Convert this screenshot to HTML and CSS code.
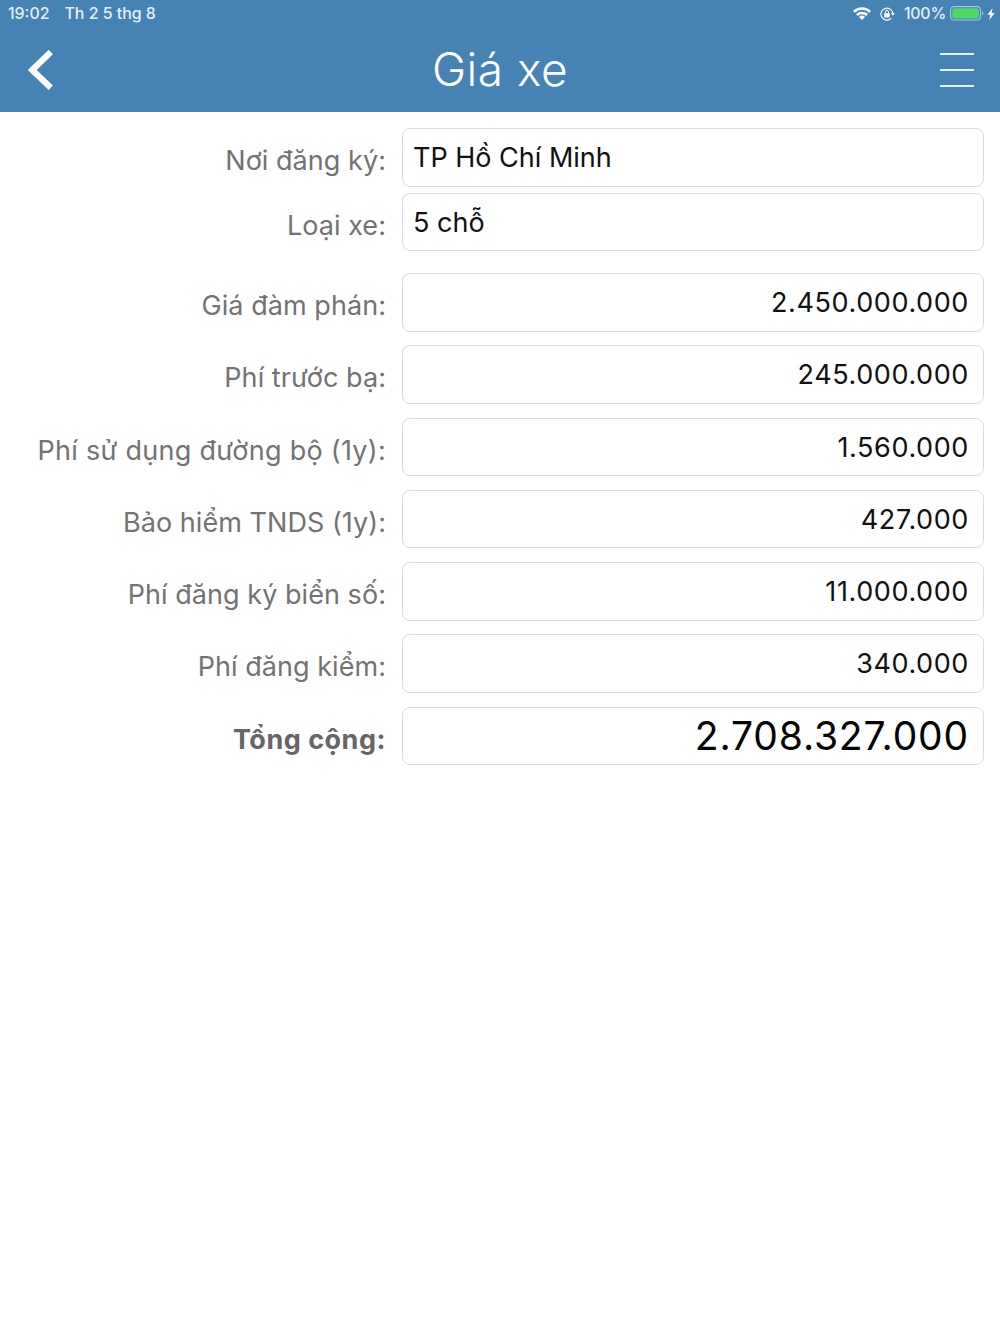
FILE: index.html
```html
<!DOCTYPE html>
<html lang="vi">

<head>
    <meta charset="UTF-8">
    <meta name="viewport" content="width=device-width, initial-scale=1.0">
    <title>Giá xe</title>
    <link rel="stylesheet" href="styles.css">
</head>

<body>
    <header>
        <div class="status-bar">
            <span class="status-time">19:02</span>
            <span class="status-date">Th 2 5 thg 8</span>
            <svg class="icon-wifi" width="18" height="13" viewBox="0 0 18 13" fill="none" stroke="#fff" stroke-width="2.5">
                <path d="M0.9 4.9a11.6 11.6 0 0 1 16.2 0"/>
                <path d="M3.9 8a7.3 7.3 0 0 1 10.2 0"/>
                <path d="M9 13L5.9 9.9a4.4 4.4 0 0 1 6.2 0z" fill="#fff" stroke="none"/>
            </svg>
            <svg class="icon-lock" width="15" height="14" viewBox="0 0 15 14" fill="none" stroke="#fff">
                <path d="M11.2 11.4A6 6 0 1 1 12.9 6.2" stroke-width="1.1"/>
                <path d="M10.8 6.1h4.1l-2 2.7z" fill="#fff" stroke="none"/>
                <rect x="4.2" y="6.2" width="5.6" height="4.2" rx="0.6" fill="#fff" stroke="none"/>
                <path d="M5.4 6.4V5a1.6 1.6 0 0 1 3.2 0v1.4" stroke-width="1"/>
            </svg>
            <span class="status-percent">100%</span>
            <svg class="icon-battery" width="35" height="15" viewBox="0 0 35 15">
                <rect x="0.6" y="0.6" width="29.8" height="13.4" rx="3.4" fill="none" stroke="#a9c6de" stroke-width="1.1"/>
                <rect x="2.2" y="2.2" width="26.6" height="10.2" rx="1.8" fill="#4cd964"/>
                <path d="M32 5.2c1.8 0.6 1.8 3.6 0 4.2z" fill="#a9c6de"/>
            </svg>
            <svg class="icon-bolt" width="8" height="12" viewBox="0 0 8 12">
                <path d="M5.6 0L0.4 6.8h2.9L2.2 12 7.7 5H4.6z" fill="#fff"/>
            </svg>
        </div>
        <div class="nav-bar">
            <svg class="icon-back" width="26" height="42" viewBox="0 0 26 42">
                <path d="M22.8 3L4.2 20.9 22.8 38.8" fill="none" stroke="#fff" stroke-width="6.2"/>
            </svg>
            <div class="nav-title">Giá xe</div>
            <div class="menu-button">
                <span></span>
                <span></span>
                <span></span>
            </div>
        </div>
    </header>

    <main>
        <div class="group-select">
            <div class="row">
                <div class="label">Nơi đăng ký:</div>
                <div class="field">TP Hồ Chí Minh</div>
            </div>
            <div class="row">
                <div class="label">Loại xe:</div>
                <div class="field">5 chỗ</div>
            </div>
        </div>

        <div class="group-price">
            <div class="row">
                <div class="label">Giá đàm phán:</div>
                <div class="field number">2.450.000.000</div>
            </div>
            <div class="row">
                <div class="label">Phí trước bạ:</div>
                <div class="field number">245.000.000</div>
            </div>
            <div class="row">
                <div class="label label-road">Phí sử dụng đường bộ (1y):</div>
                <div class="field number">1.560.000</div>
            </div>
            <div class="row">
                <div class="label">Bảo hiểm TNDS (1y):</div>
                <div class="field number">427.000</div>
            </div>
            <div class="row">
                <div class="label">Phí đăng ký biển số:</div>
                <div class="field number">11.000.000</div>
            </div>
            <div class="row">
                <div class="label">Phí đăng kiểm:</div>
                <div class="field number">340.000</div>
            </div>
            <div class="row">
                <div class="label label-total">Tổng cộng:</div>
                <div class="field number total">2.708.327.000</div>
            </div>
        </div>
    </main>
</body>

</html>
```
FILE: styles.css
```css
* {
    box-sizing: border-box;
}

body {
    font-family: Inter, 'Liberation Sans', sans-serif;
    background-color: #fff;
    margin: 0;
    min-height: 1334px;
}

header {
    height: 112px;
    background-color: #4682b4;
    color: #fff;
}

/* Status bar */
.status-bar {
    display: flex;
    align-items: center;
    height: 27px;
    padding: 0 5px 0 8px;
    font-size: 15.9px;
    font-weight: 500;
    color: #e6eff6;
    white-space: nowrap;
}

.status-date {
    margin-left: 15px;
}

.icon-wifi {
    margin-left: auto;
}

.icon-lock {
    margin-left: 9px;
}

.status-percent {
    margin-left: 9px;
    letter-spacing: -0.2px;
}

.icon-battery {
    margin-left: 4px;
}

.icon-bolt {
    margin-left: 2px;
}

/* Navigation bar */
.nav-bar {
    display: grid;
    grid-template-columns: 34px 1fr 34px;
    align-items: center;
    height: 85px;
    padding: 0 26px 0 28px;
    border-top: 1px solid #4b88ba;
}

.nav-title {
    padding: 0 2px 2px 0;
    text-align: center;
    font-size: 46px;
    font-weight: 300;
    letter-spacing: 0.5px;
}

.menu-button {
    display: flex;
    flex-direction: column;
    gap: 14px;
    width: 34px;
    padding-bottom: 1px;
}

.menu-button span {
    height: 2px;
    background-color: #e4f2fc;
}

/* Form */
main {
    padding: 16px 16px 0 0;
}

.group-select {
    display: flex;
    flex-direction: column;
    gap: 6px;
    margin-bottom: 22px;
}

.group-price {
    display: flex;
    flex-direction: column;
    gap: 13.75px;
}

.row {
    display: grid;
    grid-template-columns: 386px 1fr;
    grid-template-rows: 58.5px;
    column-gap: 16px;
    line-height: 57px;
    font-size: 27px;
}

.label {
    padding-top: 4px;
    text-align: right;
    color: #737373;
    letter-spacing: 0.05px;
    white-space: nowrap;
}

.label-road {
    letter-spacing: 0.28px;
}

.label-total {
    font-weight: 700;
    color: #666;
    letter-spacing: 0.5px;
}

.field {
    padding: 0 10px;
    border: 1px solid #dcdcdc;
    border-radius: 8px;
    color: #111;
}

.number {
    padding-right: 14px;
    text-align: right;
    letter-spacing: 0.6px;
}

.total {
    font-size: 39px;
    line-height: 55px;
    letter-spacing: 0.85px;
    color: #000;
}
```
